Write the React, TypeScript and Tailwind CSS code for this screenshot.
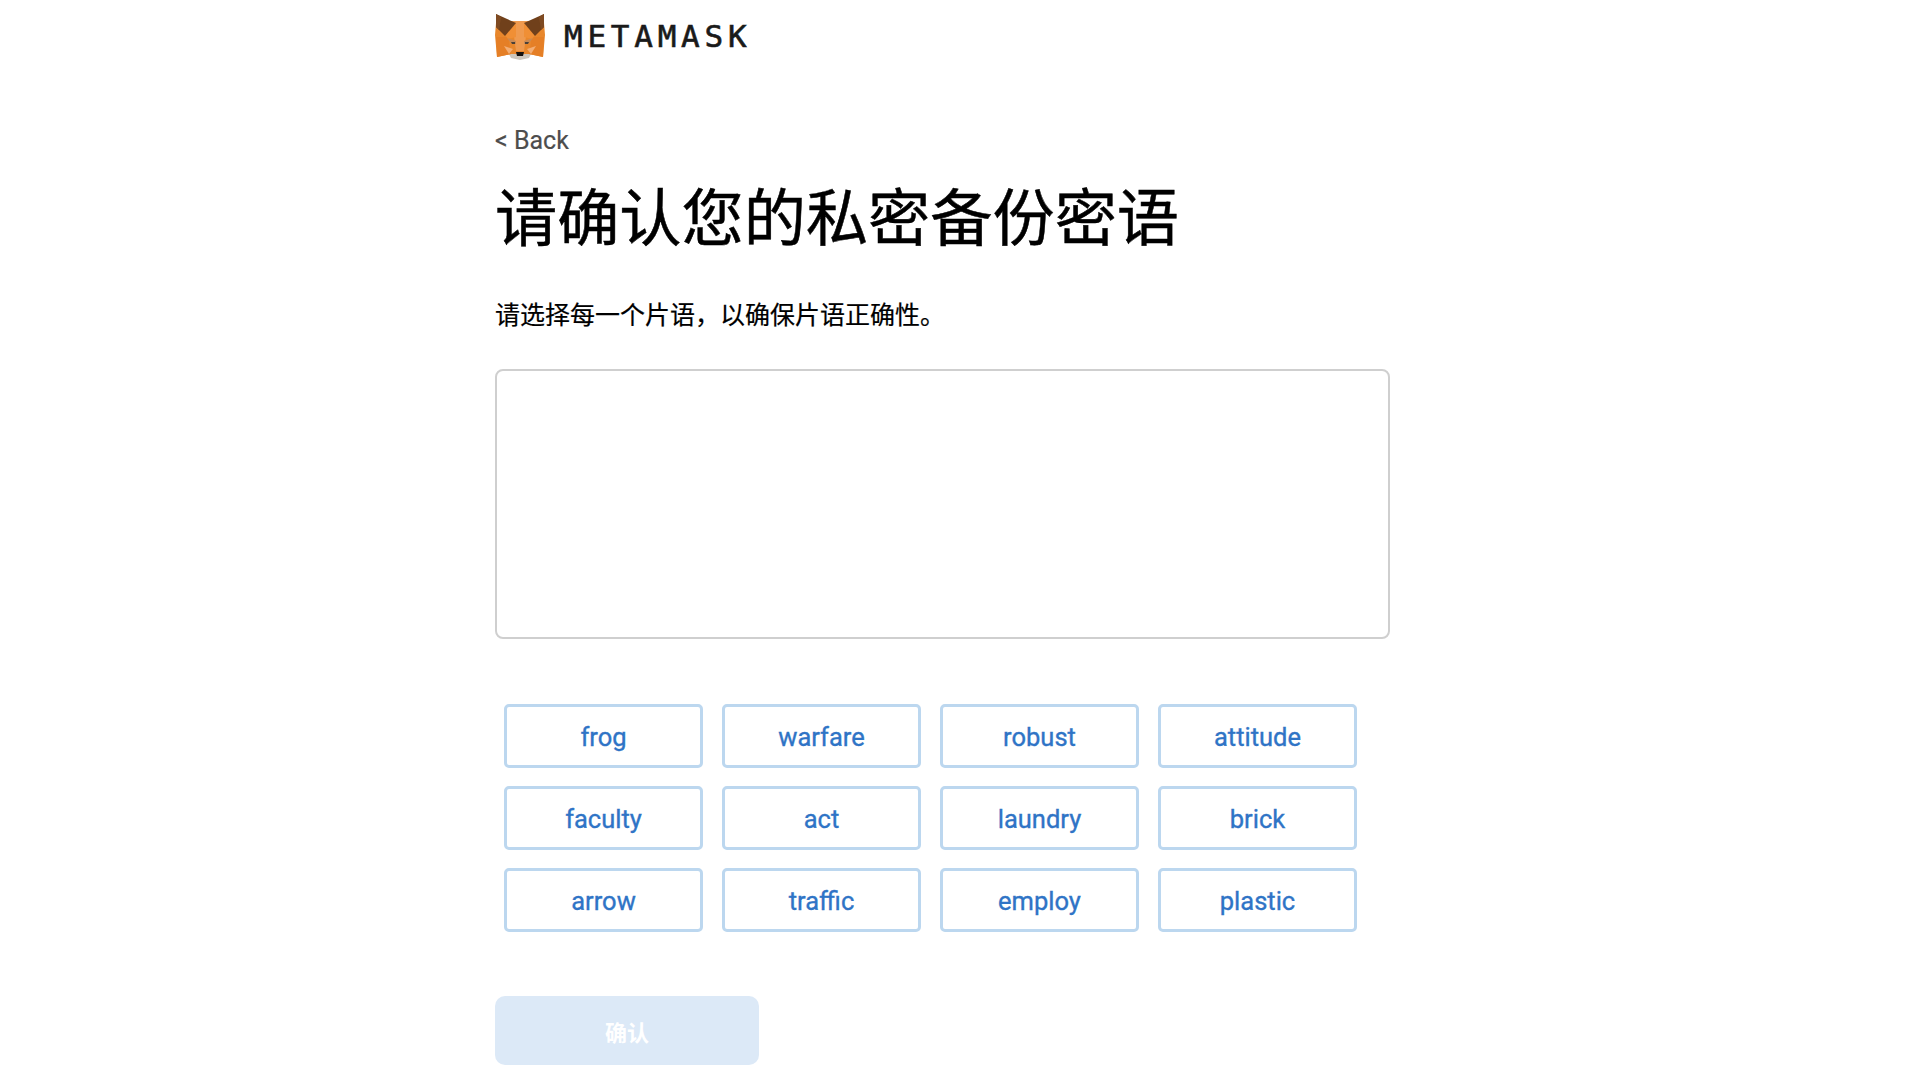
const words = [
  'frog', 'warfare', 'robust', 'attitude',
  'faculty', 'act', 'laundry', 'brick',
  'arrow', 'traffic', 'employ', 'plastic',
]

function FoxLogo() {
  return (
    <svg width="50" height="47" viewBox="0 0 50 47">
      {/* chin */}
      <polygon points="14,41 36,41 34,45 25,47 16,45" fill="#cdc6bc" />
      {/* head */}
      <polygon points="1,10 10,10 17,8 33,8 40,10 49,10 50,22 48,44 34,41 16,41 2,44 0,22" fill="#e8872c" />
      <polygon points="17,8 33,8 29,38 21,38" fill="#ef9a4f" />
      <polygon points="1,24 13,24 16,41 2,44" fill="#e57f26" />
      <polygon points="49,24 37,24 34,41 48,44" fill="#e57f26" />
      <polygon points="10,22 21,10 21,24 13,26" fill="#f08f35" />
      <polygon points="40,22 29,10 29,24 37,26" fill="#f08f35" />
      {/* ears */}
      <polygon points="1,1 21,10 10,23 1,14" fill="#70401b" />
      <polygon points="49,1 29,10 40,23 49,14" fill="#70401b" />
      <polygon points="1,1 6,4 4,17 1,14" fill="#7f4a22" />
      <polygon points="49,1 44,4 46,17 49,14" fill="#7f4a22" />
      {/* eyes */}
      <polygon points="12,25 21,28 21,31 16,30" fill="#c98a55" />
      <polygon points="38,25 29,28 29,31 34,30" fill="#c98a55" />
      <polygon points="16,29 20,29 20,31 17,31" fill="#4a4038" />
      <polygon points="34,29 30,29 30,31 33,31" fill="#4a4038" />
      {/* cheeks */}
      <polygon points="9,33 18,36 14,41" fill="#f3ae74" />
      <polygon points="41,33 32,36 36,41" fill="#f3ae74" />
      {/* nose */}
      <polygon points="21,39 29,39 28,43 22,43" fill="#15120f" />
    </svg>
  )
}

export default function App() {
  return (
    <div className="w-full h-[1080px] overflow-hidden bg-white pl-[495px] font-['Roboto','Noto_Sans_CJK_SC',sans-serif]">
      {/* Logo */}
      <div className="flex items-center gap-[19px] pt-[13px] h-[60px]">
        <FoxLogo />
        <span className="font-['DejaVu_Sans_Mono',monospace] text-[31px] leading-none tracking-[4.75px] text-[#1a1a1a] [-webkit-text-stroke:0.6px_#1a1a1a]">METAMASK</span>
      </div>

      <div className="mt-[62px] text-[25px] leading-[38px] text-[#4d4d4d] [-webkit-text-stroke:0.2px_#4d4d4d]">&lt; Back</div>

      <h1 className="mt-[16px] text-[62.2px] leading-[88px] font-normal text-black whitespace-nowrap [-webkit-text-stroke:0.5px_#000]">请确认您的私密备份密语</h1>

      <p className="mt-[34px] text-[25px] leading-[36px] text-black whitespace-nowrap [-webkit-text-stroke:0.2px_#000]">请选择每一个片语，以确保片语正确性。</p>

      {/* Selected phrase box */}
      <div className="mt-[35px] w-[895px] h-[270px] rounded-lg border-2 border-[#cfcfcf]" />

      {/* Word buttons */}
      <div className="mt-[65px] ml-[9px] grid grid-cols-[repeat(4,199px)] gap-x-[19px] gap-y-[18px]">
        {words.map((word) => (
          <button
            key={word}
            className="h-[64px] pt-[2px] rounded-[5px] border-[3px] border-[#bcd7ef] bg-white text-[25.5px] font-normal text-[#2f74c6] [-webkit-text-stroke:0.35px_#2f74c6]"
          >
            {word}
          </button>
        ))}
      </div>

      <button className="mt-[64px] block w-[264px] h-[69px] pt-[5px] rounded-[10px] bg-[#dce9f7] text-[22px] font-bold text-white">确认</button>
    </div>
  )
}
